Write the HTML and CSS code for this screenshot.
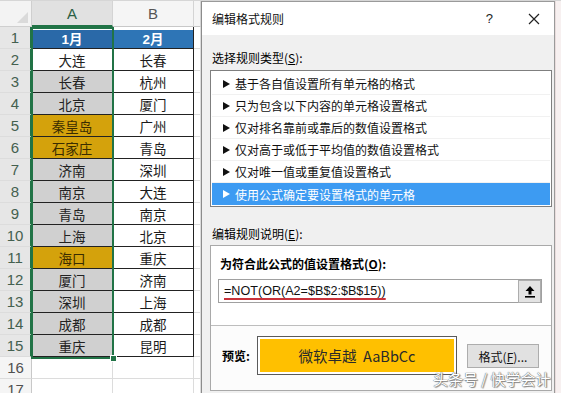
FILE: index.html
```html
<!DOCTYPE html>
<html lang="zh-CN">
<head>
<meta charset="utf-8">
<link rel="stylesheet" href="styles.css">
</head>
<body>
<div class="screen">
  <div class="sheet">
    <div class="corner"><span class="tri"></span></div>
    <div class="colhead sel">A</div>
    <div class="colhead">B</div>
    <div class="colhead"></div>

    <div class="rowhead sel">1</div><div class="cell hdr hdr-a">1月</div><div class="cell hdr">2月</div><div class="grid"></div>
    <div class="rowhead sel">2</div><div class="cell a active">大连</div><div class="cell b">长春</div><div class="grid"></div>
    <div class="rowhead sel">3</div><div class="cell a">长春</div><div class="cell b">杭州</div><div class="grid"></div>
    <div class="rowhead sel">4</div><div class="cell a">北京</div><div class="cell b">厦门</div><div class="grid"></div>
    <div class="rowhead sel">5</div><div class="cell a gold">秦皇岛</div><div class="cell b">广州</div><div class="grid"></div>
    <div class="rowhead sel">6</div><div class="cell a gold">石家庄</div><div class="cell b">青岛</div><div class="grid"></div>
    <div class="rowhead sel">7</div><div class="cell a">济南</div><div class="cell b">深圳</div><div class="grid"></div>
    <div class="rowhead sel">8</div><div class="cell a">南京</div><div class="cell b">大连</div><div class="grid"></div>
    <div class="rowhead sel">9</div><div class="cell a">青岛</div><div class="cell b">南京</div><div class="grid"></div>
    <div class="rowhead sel">10</div><div class="cell a">上海</div><div class="cell b">北京</div><div class="grid"></div>
    <div class="rowhead sel">11</div><div class="cell a gold">海口</div><div class="cell b">重庆</div><div class="grid"></div>
    <div class="rowhead sel">12</div><div class="cell a">厦门</div><div class="cell b">济南</div><div class="grid"></div>
    <div class="rowhead sel">13</div><div class="cell a">深圳</div><div class="cell b">上海</div><div class="grid"></div>
    <div class="rowhead sel">14</div><div class="cell a">成都</div><div class="cell b">成都</div><div class="grid"></div>
    <div class="rowhead sel">15</div><div class="cell a">重庆</div><div class="cell b">昆明</div><div class="grid"></div>
    <div class="rowhead">16</div><div class="grid"></div><div class="grid"></div><div class="grid"></div>
    <div class="rowhead">17</div><div class="grid"></div><div class="grid"></div><div class="grid"></div>

    <div class="selection"><span class="handle"></span></div>
  </div>

  <div class="dialog">
    <div class="titlebar">
      <span class="title">编辑格式规则</span>
      <span class="help">?</span>
      <svg class="close" width="12" height="12" viewBox="0 0 12 12"><path d="M1 1L11 11M11 1L1 11" stroke="#222" stroke-width="1.2"/></svg>
    </div>
    <div class="body">
      <div class="label l1">选择规则类型(<u>S</u>):</div>
      <div class="list">
        <div class="item"><span class="arrow"></span>基于各自值设置所有单元格的格式</div>
        <div class="item"><span class="arrow"></span>只为包含以下内容的单元格设置格式</div>
        <div class="item"><span class="arrow"></span>仅对排名靠前或靠后的数值设置格式</div>
        <div class="item"><span class="arrow"></span>仅对高于或低于平均值的数值设置格式</div>
        <div class="item"><span class="arrow"></span>仅对唯一值或重复值设置格式</div>
        <div class="item on"><span class="arrow"></span>使用公式确定要设置格式的单元格</div>
      </div>
      <div class="label l2">编辑规则说明(<u>E</u>):</div>
      <div class="group">
        <div class="top">
          <div class="blabel">为符合此公式的值设置格式(<u>O</u>):</div>
          <div class="input">
            <span class="formula">=NOT(OR(A2=$B$2:$B$15))</span>
            <span class="collapse"><svg width="12" height="13" viewBox="0 0 12 13"><path d="M6 1L1.5 6H4.5V9.5H7.5V6H10.5Z" fill="#000"/><rect x="1" y="11" width="10" height="1.6" fill="#000"/></svg></span>
          </div>
        </div>
        <div class="bottom">
          <span class="plabel">预览:</span>
          <div class="preview"><div class="pinner">微软卓越&nbsp;&nbsp;AaBbCc</div></div>
          <span class="btn">格式(<u>F</u>)...</span>
        </div>
      </div>
    </div>
  </div>
  <div class="edge"></div>
  <div class="watermark">头条号 / 快学会计</div>
</div>
</body>
</html>
```

FILE: styles.css
```css
* { box-sizing: border-box; }
html, body { margin: 0; padding: 0; }
body {
  width: 561px;
  height: 393px;
  overflow: hidden;
  background: #fff;
  font-family: "Noto Sans CJK SC", "Noto Sans", sans-serif;
}
.screen {
  position: relative;
  display: flex;
  width: 561px;
  height: 393px;
  border-top: 1px solid #d6d6d6;
}

/* ---------- spreadsheet ---------- */
.sheet {
  position: relative;
  display: grid;
  grid-template-columns: 32px 81px 81px 7px;
  grid-template-rows: 26px repeat(17, 22px);
  width: 201px;
  flex: none;
  background: #fff;
}
.corner {
  background: #f3f3f3;
  border-right: 1px solid #cfcfcf;
  border-bottom: 1px solid #cfcfcf;
  position: relative;
}
.tri {
  position: absolute;
  right: 3px;
  bottom: 3px;
  width: 0; height: 0;
  border-left: 11px solid transparent;
  border-bottom: 11px solid #dadada;
}
.colhead {
  background: #f5f5f5;
  border-right: 1px solid #d4d4d4;
  border-bottom: 1px solid #c8c8c8;
  font-family: "Liberation Sans", sans-serif;
  font-size: 15px;
  color: #555;
  display: flex;
  align-items: center;
  justify-content: center;
}
.colhead.sel {
  background: #e1e1e1;
  color: #2b5f45;
  border-bottom: 2px solid #217346;
}
.rowhead {
  background: #f5f5f5;
  border-right: 1px solid #c8c8c8;
  border-bottom: 1px solid #dcdcdc;
  font-family: "Liberation Sans", sans-serif;
  font-size: 15px;
  color: #505050;
  display: flex;
  align-items: center;
  justify-content: center;
}
.rowhead.sel {
  background: #e6e6e6;
  color: #44604f;
  border-right: 2px solid #217346;
}
.grid {
  border-right: 1px solid #dcdcdc;
  border-bottom: 1px solid #dcdcdc;
}
.cell {
  display: flex;
  align-items: center;
  justify-content: center;
  font-size: 13.5px;
  color: #1a1a1a;
  border-right: 1px solid #222;
  border-bottom: 1px solid #222;
}
.cell.hdr {
  background: #2e75b6;
  color: #fff;
  font-weight: bold;
  font-family: "Liberation Sans", "Noto Sans CJK SC", sans-serif;
  font-size: 13.5px;
  box-shadow: inset 0 3px 0 #fff;
}
.cell.hdr-a { background: #2a69a8; }
.cell.a { background: #d0d0d0; color: #222; }
.cell.a.active { background: #fff; }
.cell.a.gold { background: #d4a20c; color: #3a2c00; }
.cell.b { background: #fff; }
.selection {
  position: absolute;
  left: 31px;
  top: 26px;
  width: 83px;
  height: 332px;
  border: 2px solid #217346;
  pointer-events: none;
}
.handle {
  position: absolute;
  right: -5px;
  bottom: -5px;
  width: 7px;
  height: 7px;
  background: #217346;
  border: 1px solid #fff;
}

/* ---------- dialog ---------- */
.dialog {
  width: 354px;
  height: 393px;
  flex: none;
  display: flex;
  flex-direction: column;
  background: #f0f0f0;
  border-left: 1px solid #8c8c8c;
  border-right: 1px solid #9a9a9a;
  border-top: 1px solid #9a9a9a;
  box-shadow: -1px 0 0 #e4e4e4;
  font-size: 12px;
  color: #000;
}
.edge {
  flex: 1;
  background: #f7f0f0;
  border-left: 1px solid #e9dcdc;
}
.titlebar {
  height: 33px;
  background: #fff;
  display: flex;
  align-items: center;
  padding-left: 10px;
  flex: none;
}
.title { flex: 1; font-size: 12px; color: #111; }
.help {
  font-family: "Liberation Sans", sans-serif;
  font-size: 13px;
  color: #222;
  margin-right: 35px;
}
.close { margin-right: 14px; }
.body {
  padding: 0 2px 0 8px;
  display: flex;
  flex-direction: column;
}
.label { height: 16px; line-height: 16px; font-size: 12px; }
.l1 { margin: 15px 0 4px 2px; }
.l2 { margin: 19px 0 3px 2px; }
.list {
  height: 137px;
  background: #fff;
  border: 1px solid #7f7f7f;
  padding: 2px 1px 0 1px;
}
.item {
  height: 22px;
  display: flex;
  align-items: center;
  padding-left: 11px;
  font-size: 12px;
  color: #111;
  border-bottom: 1px solid #f1f1f1;
  white-space: nowrap;
  overflow: hidden;
}
.item.on {
  background: #3d9bf2;
  color: #fff;
  border-bottom: none;
}
.arrow {
  width: 0; height: 0;
  border-left: 7px solid #111;
  border-top: 4px solid transparent;
  border-bottom: 4px solid transparent;
  margin-right: 5px;
}
.item.on .arrow { border-left-color: #fff; }
.group {
  height: 146px;
  border: 1px solid #a9a9a9;
  background: #fff;
  display: flex;
  flex-direction: column;
}
.top {
  height: 80px;
  padding: 10px 9px 0 7px;
  border-bottom: 1px solid #bdbdbd;
}
.blabel {
  font-weight: bold;
  font-size: 12px;
  height: 16px;
  line-height: 16px;
  margin-left: 2px;
}
.input {
  margin-top: 7px;
  height: 24px;
  border: 1px solid #a0a0a0;
  background: #fff;
  display: flex;
  align-items: center;
  justify-content: space-between;
  padding-left: 5px;
}
.formula {
  font-family: "Liberation Sans", sans-serif;
  font-size: 12.6px;
  color: #111;
  text-decoration: underline;
  text-decoration-color: #c8323a;
  text-decoration-thickness: 2px;
  text-underline-offset: 3px;
}
.collapse {
  width: 23px;
  height: 23px;
  background: #e3e3e3;
  border: 1px solid #adadad;
  display: flex;
  align-items: center;
  justify-content: center;
}
.bottom {
  flex: 1;
  display: flex;
  align-items: center;
  padding: 0 0 6px 11px;
  background: #fcfcfc;
}
.plabel { font-weight: bold; font-size: 12px; width: 35px; }
.preview {
  width: 200px;
  height: 39px;
  border: 1px solid #5a5a5a;
  background: #fff;
  padding: 2px;
  margin-right: 10px;
}
.pinner {
  height: 100%;
  background: #ffc000;
  display: flex;
  align-items: center;
  justify-content: center;
  font-family: "Noto Sans CJK SC", sans-serif;
  font-size: 14.5px;
  color: #2a2a2a;
}
.btn {
  width: 72px;
  height: 24px;
  background: #e1e1e1;
  border: 1px solid #adadad;
  display: flex;
  align-items: center;
  justify-content: center;
  font-size: 12px;
  color: #111;
  margin-top: 2px;
}
.watermark {
  position: absolute;
  left: 433px;
  top: 368px;
  font-size: 15px;
  line-height: 20px;
  color: #fff;
  text-shadow: 0 0 1px #666, 0 0 1px #666, 1px 1px 1px #888;
  white-space: nowrap;
}
```
